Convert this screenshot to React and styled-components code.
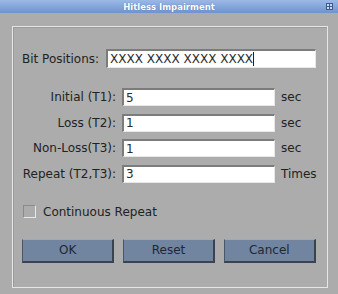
import { Fragment } from "react";
import styled, { createGlobalStyle } from "styled-components";

const GlobalStyle = createGlobalStyle`
  html, body {
    margin: 0;
    padding: 0;
    background: #acacac;
  }
  body {
    font-family: "DejaVu Sans", sans-serif;
    font-size: 12px;
    color: #222;
  }
`;

const Window = styled.div`
  width: 338px;
  height: 294px;
  background: #acacac;
  display: flex;
  flex-direction: column;
  overflow: hidden;
`;

const TitleBar = styled.div`
  height: 13px;
  background: linear-gradient(#9bb9e6, #6f93cf);
  display: flex;
  align-items: center;
  justify-content: center;
  position: relative;
  color: #fff;
  font-size: 8.5px;
  font-weight: bold;
  text-shadow: 0 0 1px #46669a;
`;

const MaxIcon = styled.svg`
  position: absolute;
  right: 5px;
  top: 3px;
`;

const Panel = styled.div`
  margin: 13px 10px 0 12px;
  height: 262px;
  box-sizing: border-box;
  border: 1px solid #e6e6e6;
  box-shadow: inset 1px 1px 0 #9a9a9a;
  padding: 22px 11px 0 9px;
  display: flex;
  flex-direction: column;
`;

const BitRow = styled.div`
  display: flex;
  align-items: center;
  gap: 7px;
  height: 19px;
  white-space: nowrap;
`;

const Input = styled.div`
  box-sizing: border-box;
  flex-shrink: 0;
  height: ${(p) => p.$h || 18}px;
  width: ${(p) => p.$w}px;
  background: #fff;
  border-top: 2px solid #7c7c7c;
  border-left: 2px solid #7c7c7c;
  border-right: 1px solid #e8e8e8;
  border-bottom: 1px solid #e8e8e8;
  padding-left: 2px;
  display: flex;
  align-items: center;
  font-size: 12px;
  color: #2a2a2a;
  white-space: nowrap;
`;

const Caret = styled.span`
  display: inline-block;
  width: 1px;
  height: 14px;
  background: #222;
`;

const Grid = styled.div`
  display: grid;
  grid-template-columns: 94px 153px auto;
  column-gap: 6px;
  row-gap: 7.5px;
  margin-top: 20px;
  align-items: center;
`;

const Label = styled.span`
  text-align: right;
  white-space: nowrap;
`;

const Unit = styled.span`
  white-space: nowrap;
`;

const CheckRow = styled.div`
  display: flex;
  align-items: center;
  gap: 7px;
  margin-top: 22px;
  margin-left: 1px;
`;

const Box = styled.span`
  box-sizing: border-box;
  width: 13px;
  height: 13px;
  border-top: 1px solid #8a8a8a;
  border-left: 1px solid #8a8a8a;
  border-right: 1px solid #e8e8e8;
  border-bottom: 1px solid #e8e8e8;
`;

const Buttons = styled.div`
  display: flex;
  gap: 8.5px;
  margin-top: 20px;
`;

const Button = styled.div`
  box-sizing: border-box;
  width: 93px;
  height: 24px;
  background: #7184a0;
  border-top: 1px solid #9aaac0;
  border-left: 1px solid #4a5666;
  border-right: 2px solid #3a4450;
  border-bottom: 2px solid #3a4450;
  display: flex;
  align-items: center;
  justify-content: center;
  color: #1c2836;
  font-size: 12px;
`;

const rows = [
  { label: "Initial (T1):", value: "5", unit: "sec" },
  { label: "Loss (T2):", value: "1", unit: "sec" },
  { label: "Non-Loss(T3):", value: "1", unit: "sec" },
  { label: "Repeat (T2,T3):", value: "3", unit: "Times" },
];

export default function App() {
  return (
    <>
      <GlobalStyle />
      <Window>
        <TitleBar>
          Hitless Impairment
          <MaxIcon width="7" height="7" viewBox="0 0 7 7">
            <rect x="0.5" y="0.5" width="6" height="6" fill="#c8d8f0" stroke="#3c5a8c" />
            <path d="M3.5 0.5V6.5M0.5 3.5H6.5" stroke="#3c5a8c" />
          </MaxIcon>
        </TitleBar>
        <Panel>
          <BitRow>
            <span>Bit Positions:</span>
            <Input $w={210} $h={19}>
              XXXX XXXX XXXX XXXX
              <Caret />
            </Input>
          </BitRow>
          <Grid>
            {rows.map((r) => (
              <Fragment key={r.label}>
                <Label>{r.label}</Label>
                <Input $w={153}>{r.value}</Input>
                <Unit>{r.unit}</Unit>
              </Fragment>
            ))}
          </Grid>
          <CheckRow>
            <Box />
            <span>Continuous Repeat</span>
          </CheckRow>
          <Buttons>
            <Button>OK</Button>
            <Button>Reset</Button>
            <Button>Cancel</Button>
          </Buttons>
        </Panel>
      </Window>
    </>
  );
}
